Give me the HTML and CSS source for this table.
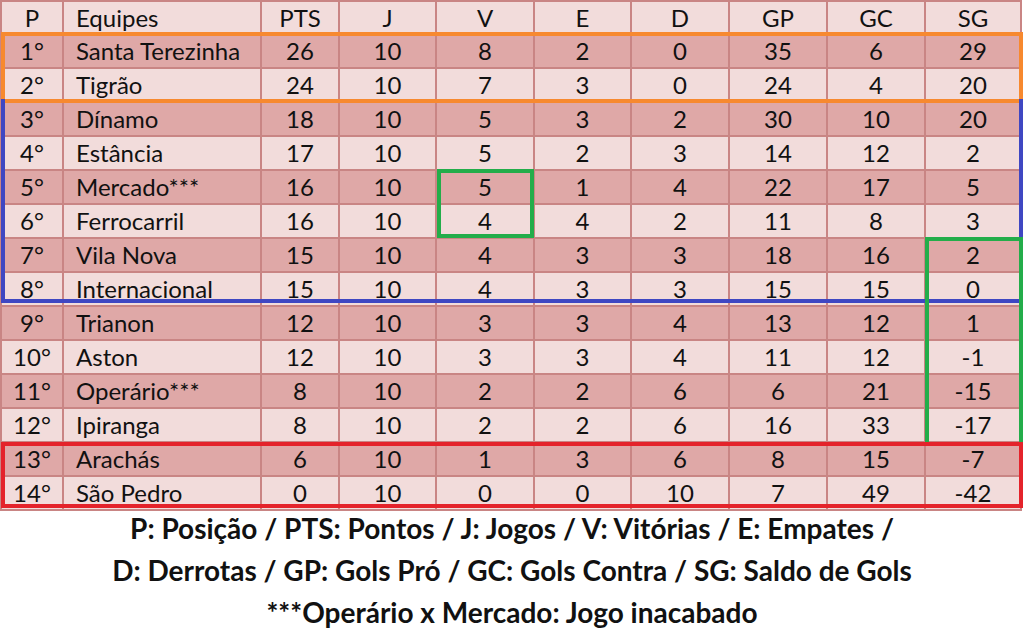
FILE: index.html
```html
<!DOCTYPE html>
<html lang="pt">
<head>
<meta charset="utf-8">
<title>Classificação</title>
<link rel="stylesheet" href="styles.css">
</head>
<body>
<div class="board">
  <table class="standings">
    <colgroup>
      <col class="c-p"><col class="c-team"><col class="c-pts"><col class="c-j"><col class="c-v"><col class="c-e"><col class="c-d"><col class="c-gp"><col class="c-gc"><col class="c-sg">
    </colgroup>
    <thead>
      <tr><th>P</th><th class="team">Equipes</th><th>PTS</th><th>J</th><th>V</th><th>E</th><th>D</th><th>GP</th><th>GC</th><th>SG</th></tr>
    </thead>
    <tbody>
      <tr><td>1°</td><td class="team">Santa Terezinha</td><td>26</td><td>10</td><td>8</td><td>2</td><td>0</td><td>35</td><td>6</td><td>29</td></tr>
      <tr><td>2°</td><td class="team">Tigrão</td><td>24</td><td>10</td><td>7</td><td>3</td><td>0</td><td>24</td><td>4</td><td>20</td></tr>
      <tr><td>3°</td><td class="team">Dínamo</td><td>18</td><td>10</td><td>5</td><td>3</td><td>2</td><td>30</td><td>10</td><td>20</td></tr>
      <tr><td>4°</td><td class="team">Estância</td><td>17</td><td>10</td><td>5</td><td>2</td><td>3</td><td>14</td><td>12</td><td>2</td></tr>
      <tr><td>5°</td><td class="team">Mercado***</td><td>16</td><td>10</td><td>5</td><td>1</td><td>4</td><td>22</td><td>17</td><td>5</td></tr>
      <tr><td>6°</td><td class="team">Ferrocarril</td><td>16</td><td>10</td><td>4</td><td>4</td><td>2</td><td>11</td><td>8</td><td>3</td></tr>
      <tr><td>7°</td><td class="team">Vila Nova</td><td>15</td><td>10</td><td>4</td><td>3</td><td>3</td><td>18</td><td>16</td><td>2</td></tr>
      <tr><td>8°</td><td class="team">Internacional</td><td>15</td><td>10</td><td>4</td><td>3</td><td>3</td><td>15</td><td>15</td><td>0</td></tr>
      <tr><td>9°</td><td class="team">Trianon</td><td>12</td><td>10</td><td>3</td><td>3</td><td>4</td><td>13</td><td>12</td><td>1</td></tr>
      <tr><td>10°</td><td class="team">Aston</td><td>12</td><td>10</td><td>3</td><td>3</td><td>4</td><td>11</td><td>12</td><td>-1</td></tr>
      <tr><td>11°</td><td class="team">Operário***</td><td>8</td><td>10</td><td>2</td><td>2</td><td>6</td><td>6</td><td>21</td><td>-15</td></tr>
      <tr><td>12°</td><td class="team">Ipiranga</td><td>8</td><td>10</td><td>2</td><td>2</td><td>6</td><td>16</td><td>33</td><td>-17</td></tr>
      <tr><td>13°</td><td class="team">Arachás</td><td>6</td><td>10</td><td>1</td><td>3</td><td>6</td><td>8</td><td>15</td><td>-7</td></tr>
      <tr><td>14°</td><td class="team">São Pedro</td><td>0</td><td>10</td><td>0</td><td>0</td><td>10</td><td>7</td><td>49</td><td>-42</td></tr>
    </tbody>
  </table>
  <div class="zone zone-orange"></div>
  <div class="zone zone-blue"></div>
  <div class="zone zone-green-v"></div>
  <div class="zone zone-green-sg"></div>
  <div class="zone zone-red"></div>
</div>
<div class="legend">
  <p>P: Posição / PTS: Pontos / J: Jogos / V: Vitórias / E: Empates /</p>
  <p>D: Derrotas / GP: Gols Pró / GC: Gols Contra / SG: Saldo de Gols</p>
  <p>***Operário x Mercado: Jogo inacabado</p>
</div>
</body>
</html>
```
FILE: styles.css
```css
html, body {
  margin: 0;
  padding: 0;
  background: #ffffff;
}
body {
  width: 1024px;
  height: 630px;
  overflow: hidden;
  font-family: Lato, "Open Sans", "Liberation Sans", sans-serif;
  color: #111111;
}
.board {
  position: relative;
  width: 1022px;
}
.standings {
  width: 1022px;
  border-collapse: collapse;
  table-layout: fixed;
  font-size: 24px;
}
.c-p { width: 62px; }
.c-team { width: 198px; }
.c-pts { width: 78px; }
.c-j { width: 97px; }
.c-v { width: 98px; }
.c-e { width: 97px; }
.c-d { width: 98px; }
.c-gp { width: 98px; }
.c-gc { width: 98px; }
.c-sg { width: 96px; }
.standings th,
.standings td {
  border: 2px solid #c98584;
  height: 32px;
  padding: 0;
  text-align: center;
  font-weight: 400;
  line-height: 32px;
  white-space: nowrap;
}
.standings thead th {
  height: 31px;
  line-height: 31px;
  background: #f2dcdb;
}
.standings tbody tr:nth-child(odd) td { background: #dfa8a7; }
.standings tbody tr:nth-child(even) td { background: #f2dcdb; }
.standings .team {
  text-align: left;
  padding-left: 12px;
}
.zone {
  position: absolute;
  box-sizing: border-box;
  border: 4px solid;
  pointer-events: none;
}
.zone-orange {
  left: 1px; top: 32px; width: 1022px; height: 71px;
  border-color: #f7892f;
}
.zone-blue {
  left: 1px; top: 99px; width: 1022px; height: 204px;
  border-color: #3f47c2;
  border-top: none;
}
.zone-green-v {
  left: 437px; top: 169px; width: 97px; height: 69px;
  border-color: #23ad4a;
}
.zone-green-sg {
  left: 925px; top: 237px; width: 98px; height: 209px;
  border-color: #23ad4a;
}
.zone-red {
  left: 1px; top: 442px; width: 1022px; height: 66px;
  border-color: #e4232b;
}
.legend {
  margin-top: -4px;
  text-align: center;
  font-weight: 700;
  font-size: 28px;
  color: #111111;
}
.legend p {
  margin: 0;
  line-height: 42px;
}
```
